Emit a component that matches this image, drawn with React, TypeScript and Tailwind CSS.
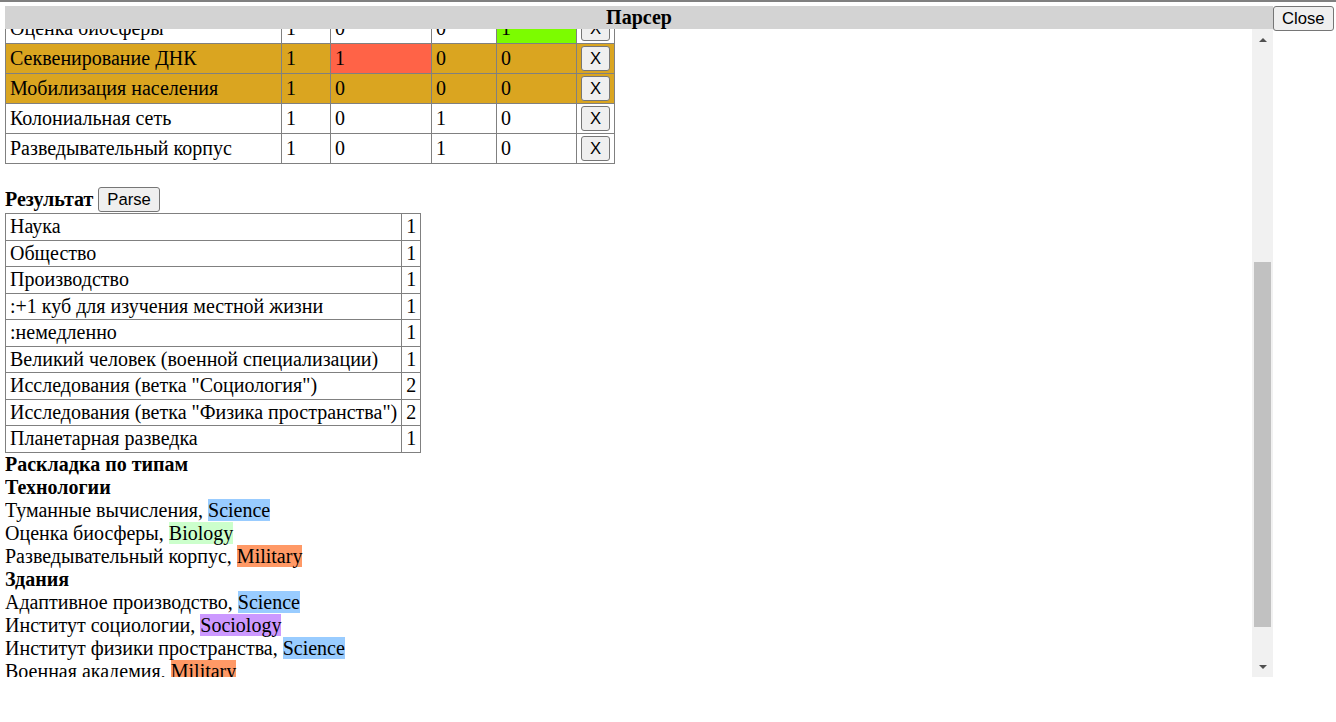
import React from 'react';

type Tech = { name: string; cells: (0 | 1)[]; row?: string; hot?: Record<number, string> };

const techs: Tech[] = [
  { name: 'Оценка биосферы', cells: [1, 0, 0, 1], hot: { 3: 'bg-[#7cfc00]' } },
  { name: 'Секвенирование ДНК', cells: [1, 1, 0, 0], row: 'bg-[#daa520]', hot: { 1: 'bg-[#ff6347]' } },
  { name: 'Мобилизация населения', cells: [1, 0, 0, 0], row: 'bg-[#daa520]' },
  { name: 'Колониальная сеть', cells: [1, 0, 1, 0] },
  { name: 'Разведывательный корпус', cells: [1, 0, 1, 0] },
];

const results: [string, number][] = [
  ['Наука', 1],
  ['Общество', 1],
  ['Производство', 1],
  [':+1 куб для изучения местной жизни', 1],
  [':немедленно', 1],
  ['Великий человек (военной специализации)', 1],
  ['Исследования (ветка "Социология")', 2],
  ['Исследования (ветка "Физика пространства")', 2],
  ['Планетарная разведка', 1],
];

const tagColor: Record<string, string> = {
  Science: 'bg-[#99ccff]',
  Biology: 'bg-[#ccffcc]',
  Military: 'bg-[#ff9966]',
  Sociology: 'bg-[#cc99ff]',
};

const groups: { title: string; items: [string, string][] }[] = [
  {
    title: 'Технологии',
    items: [
      ['Туманные вычисления', 'Science'],
      ['Оценка биосферы', 'Biology'],
      ['Разведывательный корпус', 'Military'],
    ],
  },
  {
    title: 'Здания',
    items: [
      ['Адаптивное производство', 'Science'],
      ['Институт социологии', 'Sociology'],
      ['Институт физики пространства', 'Science'],
      ['Военная академия', 'Military'],
    ],
  },
];

const Btn: React.FC<{ children: React.ReactNode }> = ({ children }) => (
  <button className="h-[25px] px-[8px] leading-[19px] text-[16.67px] font-['Liberation_Sans',Arial,sans-serif] text-black bg-[#efefef] border border-[#767676] rounded-[3px]">
    {children}
  </button>
);

const cell = 'border border-[#808080] px-[4px] py-[2px] align-middle';
const rcell = 'border border-[#808080] px-[4px] py-[1.25px]';

export default function App() {
  return (
    <div className="h-[722px] bg-white border-t-2 border-[#808080] pt-[4px] pl-[5px] flex items-start font-['Liberation_Serif','Times_New_Roman',serif] text-[20px] leading-[23px] text-black">
      <div className="w-[1268px] flex flex-col">
        {/* title bar */}
        <div className="h-[23px] bg-[#d3d3d3] text-center font-bold">Парсер</div>

        <div className="h-[648px] flex">
          <div className="flex-1 overflow-hidden">
            <div className="-mt-[16px]">
              <table className="table-fixed w-[610px] border-collapse">
                <colgroup>
                  <col className="w-[276px]" />
                  <col className="w-[49px]" />
                  <col className="w-[101px]" />
                  <col className="w-[65px]" />
                  <col className="w-[80px]" />
                  <col className="w-[38px]" />
                </colgroup>
                <tbody>
                  {techs.map((t) => (
                    <tr key={t.name} className={t.row}>
                      <td className={cell}>{t.name}</td>
                      {t.cells.map((v, i) => (
                        <td key={i} className={`${cell} ${t.hot?.[i] ?? ''}`}>
                          {v}
                        </td>
                      ))}
                      <td className={`${cell} px-[3px]`}>
                        <Btn>X</Btn>
                      </td>
                    </tr>
                  ))}
                </tbody>
              </table>

              <div className="mt-[22px] h-[27px] flex items-center gap-[5px]">
                <b>Результат</b>
                <Btn>Parse</Btn>
              </div>

              <table className="border-collapse">
                <tbody>
                  {results.map(([name, n]) => (
                    <tr key={name}>
                      <td className={rcell}>{name}</td>
                      <td className={rcell}>{n}</td>
                    </tr>
                  ))}
                </tbody>
              </table>

              <div className="font-bold">Раскладка по типам</div>
              {groups.map((g) => (
                <div key={g.title}>
                  <div className="font-bold">{g.title}</div>
                  {g.items.map(([name, tag]) => (
                    <div key={name}>
                      {name}, <span className={tagColor[tag]}>{tag}</span>
                    </div>
                  ))}
                </div>
              ))}
            </div>
          </div>

          {/* scrollbar */}
          <div className="w-[21px] bg-[#f1f1f1] flex flex-col">
            <div className="h-[21px] flex items-center justify-center">
              <div className="w-0 h-0 border-l-[4px] border-r-[4px] border-b-[4px] border-l-transparent border-r-transparent border-b-[#505050]" />
            </div>
            <div className="mt-[212px] h-[365px] mx-[2px] bg-[#c1c1c1]" />
            <div className="flex-1" />
            <div className="h-[21px] flex items-center justify-center">
              <div className="w-0 h-0 border-l-[4px] border-r-[4px] border-t-[4px] border-l-transparent border-r-transparent border-t-[#505050]" />
            </div>
          </div>
        </div>
      </div>

      <Btn>Close</Btn>
    </div>
  );
}
